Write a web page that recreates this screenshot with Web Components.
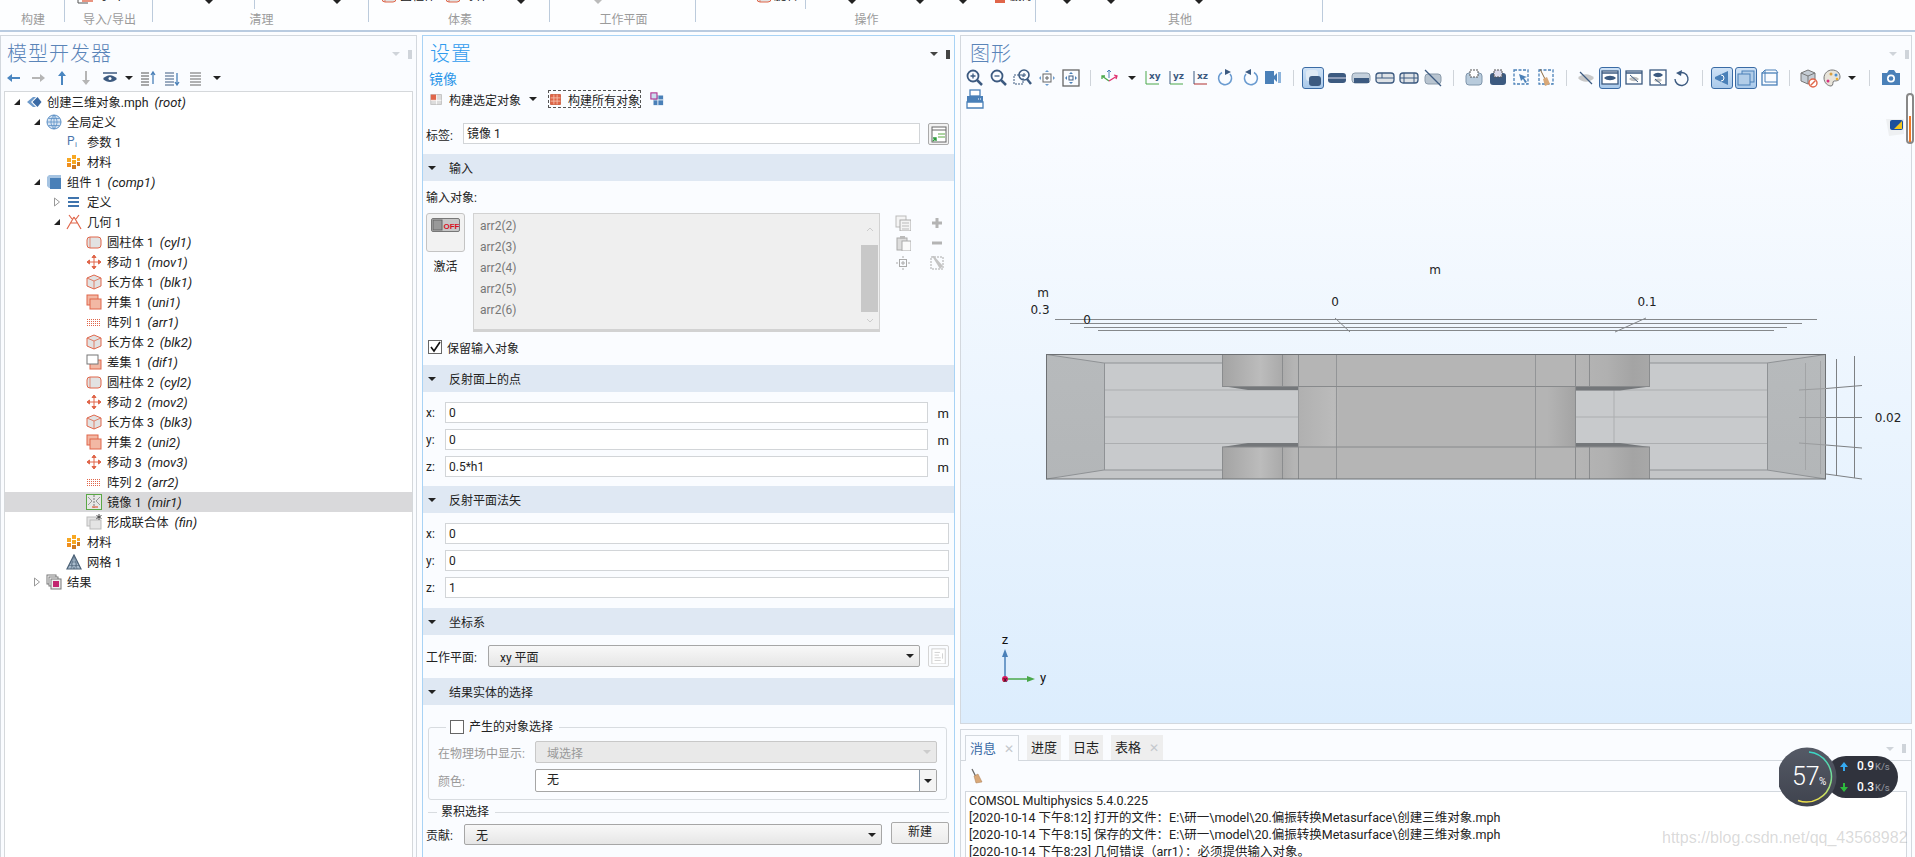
<!DOCTYPE html>
<html lang="zh">
<head>
<meta charset="utf-8">
<title>COMSOL</title>
<style>
    html, body { margin: 0; padding: 0; background: #fcfdff; }
    body {
        width: 1915px;
        height: 857px;
        overflow: hidden;
        position: relative;
        font: 12px Roboto, "Noto Sans CJK SC", sans-serif;
        color: #222;
    }
    .main { display: flex; align-items: flex-start; padding-top: 3px; }
    .right { display: flex; flex-direction: column; gap: 5px; margin-left: 5px; }
</style>
</head>
<body>
<com-ribbon></com-ribbon>
<div class="main">
    <model-panel></model-panel>
    <settings-panel></settings-panel>
    <div class="right">
        <graphics-panel></graphics-panel>
        <messages-panel></messages-panel>
    </div>
</div>
<net-widget></net-widget>
<blog-mark>https://blog.csdn.net/qq_43568982</blog-mark>

<script>
const RED = '#e0664a', PINK = '#f2b8a4', BLUE = '#4a80b8', NAVY = '#3c5a80';
const gridDots = () => {
    let s = '';
    for (let y = 5; y < 12; y += 2) for (let x = 1; x < 15; x += 2) s += `<rect x="${x}" y="${y}" width="1" height="1" fill="${RED}"/>`;
    return s;
};

// 所有图标放在这里, viewBox 由 size 决定
const ICONS = {
    root: `<path d="M1 8l6-5h3L5 8l5 5H7z" fill="#6f9bcb"/><path d="M6.500 8l5-5 4 5-4 5z" fill="#3a6aa5"/>`,
    globe: `<circle cx="8" cy="8" r="7" fill="#d6e4f3" stroke="#5b8fc5"/><path d="M1 8h14M8 1v14M2.500 4.500h11M2.500 11.500h11M8 1c-4 4-4 10 0 14M8 1c4 4 4 10 0 14" fill="none" stroke="#5b8fc5" stroke-width=".8"/>`,
    pi: `<text x="1" y="11" font-size="12" fill="#4a76ad" font-family="Roboto">P</text><text x="9" y="13" font-size="8" fill="#4a76ad" font-family="Roboto">i</text>`,
    mat: `<path fill="#f7a823" d="M1 4h4v4H1zM6 1h4v4H6zM11 4h3v3h-3zM6 6h4v4H6z"/><path fill="#f08f1e" d="M1 9h4v4H1z"/><path fill="#cf7a20" d="M11 8h3v4h-3zM6 11h4v4H6z"/>`,
    comp: `<path d="M1 3l2-2h12v13H3l-2-2z" fill="#a6c4e2"/><rect x="4" y="4" width="11" height="11" fill="${BLUE}"/>`,
    defs: `<path d="M2 4h11M2 8h11M2 12h11" stroke="#3f74ad" stroke-width="2"/>`,
    geom: `<path d="M8 3L1 15M8 3l7 12M3 1l3 4M13 1l-3 4M4 9h8" stroke="${RED}" fill="none" stroke-width="1.200"/>`,
    cyl: `<rect x="1" y="3" width="14" height="11" rx="3" fill="#e2e2e2" stroke="${RED}"/><path d="M4 3v11" stroke="${RED}" stroke-width=".7"/>`,
    mov: `<path d="M8 1v14M1 8h14M8 1L6 3.500h4zM8 15l-2-2.500h4zM1 8l2.500-2v4zM15 8l-2.500-2v4z" stroke="${RED}" fill="${RED}"/>`,
    blk: `<path d="M8 1l7 3v8l-7 3-7-3V4z" fill="#e2e2e2" stroke="${RED}"/><path d="M1 4l7 3 7-3M8 7v8" fill="none" stroke="${RED}" stroke-width=".8"/>`,
    uni: `<rect x="1" y="1" width="11" height="10" fill="${PINK}" stroke="${RED}"/><rect x="4" y="5" width="11" height="10" fill="${PINK}" stroke="${RED}"/>`,
    arr: gridDots(),
    dif: `<rect x="4" y="6" width="11" height="9" fill="${PINK}" stroke="${RED}"/><rect x="1" y="1" width="11" height="9" fill="#fff" stroke="#777"/>`,
    mir: `<rect x=".5" y=".5" width="15" height="15" fill="#e6e6e6" stroke="#5aa845"/><path d="M8 1v13" stroke="#777" stroke-dasharray="2 1"/><path d="M2 3l4 4-4 4M14 3l-4 4 4 4" fill="none" stroke="#999"/><path d="M6 13h6" stroke="${RED}" stroke-width="1.300"/>`,
    fin: `<rect x="1" y="3" width="10" height="9" fill="#e4e4e4" stroke="#bbb"/><rect x="4" y="6" width="11" height="9" fill="#e4e4e4" stroke="#bbb"/><path d="M13 0v6M10.500 1.500l5 3M15.500 1.500l-5 3" stroke="#444"/>`,
    mesh: `<path d="M8 1l7 14H1z" fill="#a9bccd" stroke="#4d6378" stroke-width="1.200"/><path d="M4.500 8h7M3 11.500h10M8 1l-3 14M8 1l3 14M4.500 8L8 15l3.500-7" stroke="#4d6378" stroke-width=".6" fill="none"/>`,
    res: `<rect x="1" y="1" width="9" height="9" fill="#fff" stroke="#777"/><rect x="3" y="3" width="9" height="9" fill="#fff" stroke="#777"/><rect x="5" y="5" width="10" height="10" fill="#eee" stroke="#777"/><rect x="7" y="7" width="6" height="6" fill="#c2256f"/>`,
    exp: `<path d="M1 6v9h10" stroke="#555" fill="none"/><path d="M5 13h11" stroke="${RED}" stroke-width="1.400"/>`,
    trash: `<rect x="3" y="2" width="10" height="13" fill="${RED}"/>`,

    left: `<path d="M1 8l5-4v3h8v2H6v3z" fill="#4a86c0"/>`,
    right: `<path d="M15 8l-5-4v3H2v2h8v3z" fill="#b5b5b5"/>`,
    up: `<path d="M8 1l4 5H9v9H7V6H4z" fill="#4a86c0"/>`,
    down: `<path d="M8 15l4-5H9V1H7v9H4z" fill="#b5b5b5"/>`,
    eye: `<path d="M1 3h14" stroke="${NAVY}" stroke-width="1.500"/><path d="M1 9c4-5 10-5 14 0-4 4-10 4-14 0z" fill="${NAVY}"/><circle cx="8" cy="8.500" r="1.500" fill="#fff"/>`,
    lup: `<path d="M1 3h9M1 6h9M1 9h9M1 12h9M1 15h9" stroke="#555" stroke-dasharray="8 1"/><path d="M13 14V3M11 5l2-3 2 3" stroke="${BLUE}" fill="none" stroke-width="1.300"/>`,
    ldn: `<path d="M1 3h9M1 6h9M1 9h9M1 12h9M1 15h9" stroke="${NAVY}"/><path d="M13 3v11M11 12l2 3 2-3" stroke="${BLUE}" fill="none" stroke-width="1.300"/>`,
    list: `<path d="M2 3h11M2 6h11M2 9h11M2 12h11M2 15h11" stroke="#666"/>`,

    buildsel: `<rect x="1" y="2" width="13" height="12" fill="#ddd" stroke="#bbb"/><rect x="1" y="2" width="7" height="7" fill="${RED}"/><path d="M8 2v12M1 9h13" stroke="#fff"/>`,
    buildall: `<rect x="2" y="2" width="12" height="12" fill="${RED}" stroke="#c9502f"/><path d="M6 2v12M10 2v12M2 6h12M2 10h12" stroke="#f5c5b2"/>`,
    buildblue: `<rect x="4" y="4" width="11" height="11" fill="${BLUE}"/><path d="M9 4v11M4 9h11" stroke="#fff"/><rect x="1" y="1" width="7" height="7" fill="#cde" stroke="#b02a8c" stroke-width="1.200"/>`,
    note: `<rect x="2" y="2" width="14" height="15" fill="#fff" stroke="#666"/><path d="M2 5h14" stroke="#666"/><path d="M8 9h7M8 12h7" stroke="#5aa845"/><path d="M3 16l3-3M3 13h3v3" stroke="#2d9a3c" fill="none" stroke-width="1.400"/>`,
    off: `<rect x=".5" y=".5" width="28" height="13" rx="1.500" fill="#c6c6c6" stroke="#777"/><rect x="2" y="2" width="9" height="10" fill="#999" stroke="#666"/><text x="12.500" y="10.500" font-size="8" font-weight="700" fill="#d8111f" font-family="Liberation Sans">OFF</text>`,
    copy: `<rect x="1" y="1" width="10" height="11" fill="#f4f4f4" stroke="#bbb"/><rect x="5" y="5" width="11" height="11" fill="#f4f4f4" stroke="#aaa"/><path d="M7 8h7M7 11h7M7 14h7" stroke="#bbb"/>`,
    paste: `<rect x="2" y="3" width="10" height="12" fill="#ddd" stroke="#aaa"/><rect x="5" y="1" width="5" height="3" fill="#bbb"/><rect x="7" y="6" width="9" height="10" fill="#fafafa" stroke="#aaa"/>`,
    target: `<rect x="4.500" y="4.500" width="7" height="7" fill="none" stroke="#aaa"/><path d="M8 6v4M6 8h4M8 1v2M8 13v2M1 8h2M13 8h2" stroke="#aaa"/>`,
    plus: `<path d="M8 3v10M3 8h10" stroke="#b4b4b4" stroke-width="3"/>`,
    minus: `<path d="M3 8h10" stroke="#b4b4b4" stroke-width="3"/>`,
    clear: `<rect x="2" y="2" width="12" height="12" fill="none" stroke="#aaa" stroke-dasharray="2 1"/><path d="M3 1l8 13 3-3L5 1z" fill="#c4c4c4"/>`,
    wp: `<rect x="1" y="1" width="15" height="17" fill="#fff" stroke="#ccc"/><path d="M4 5h6M4 8h5M4 11h7M4 14h7M13 6v6" stroke="#ccc"/>`,
    broom: `<path d="M3 1l4 8" stroke="#666" stroke-width="1.300"/><path d="M5 8l4-2 4 8-6 1z" fill="#d9a878" stroke="#a87a50" stroke-width=".5"/>`,

    zin: `<circle cx="8" cy="8" r="5.500" fill="none" stroke="${NAVY}" stroke-width="1.800"/><path d="M12 12l5 5" stroke="${NAVY}" stroke-width="2.500"/><path d="M8 5.500v5M5.500 8h5" stroke="${NAVY}" stroke-width="1.300"/>`,
    zout: `<circle cx="8" cy="8" r="5.500" fill="none" stroke="${NAVY}" stroke-width="1.800"/><path d="M12 12l5 5" stroke="${NAVY}" stroke-width="2.500"/><path d="M5.500 8h5" stroke="${NAVY}" stroke-width="1.300"/>`,
    zbox: `<rect x="1" y="7" width="9" height="9" fill="none" stroke="${NAVY}" stroke-dasharray="2 1"/><circle cx="11" cy="7" r="5" fill="none" stroke="${NAVY}" stroke-width="1.600"/><path d="M14 11l4 5" stroke="${NAVY}" stroke-width="2.400"/><path d="M11 5v4M9 7h4" stroke="${NAVY}"/>`,
    zsel: `<rect x="6" y="6" width="8" height="8" fill="none" stroke="#666"/><path d="M10 8v4M8 10h4" stroke="#666"/><path d="M10 2l-2 2h4zM10 18l-2-2h4zM2 10l2-2v4zM18 10l-2-2v4z" fill="#6a9bd0"/>`,
    zext: `<rect x="2" y="2" width="16" height="16" fill="none" stroke="#666" stroke-width="1.300"/><rect x="8" y="8" width="4" height="4" fill="none" stroke="${NAVY}"/><path d="M10 4l-2 2h4zM10 16l-2-2h4zM4 10l2-2v4zM16 10l-2-2v4z" fill="${BLUE}"/>`,
    axes: `<path d="M10 10V2M8 4l2-2 2 2" stroke="${BLUE}" fill="none"/><path d="M10 13L3 8M3 11V8h3" stroke="#4aa84a" fill="none" stroke-width="1.300"/><path d="M10 13l8-5M15 7l3 1-1 3" stroke="#e0306f" fill="none" stroke-width="1.300"/>`,
    xy: `<path d="M2 3v13h13" stroke="#4aa84a" fill="none"/><text x="5" y="11" font-size="9" font-weight="700" fill="${NAVY}" font-family="DejaVu Sans">xy</text>`,
    yz: `<path d="M2 3v13" stroke="${NAVY}"/><path d="M2 16h13" stroke="#4aa84a"/><text x="5" y="11" font-size="9" font-weight="700" fill="${NAVY}" font-family="DejaVu Sans">yz</text>`,
    xz: `<path d="M2 3v13" stroke="${NAVY}"/><path d="M2 16h13" stroke="#b03030"/><text x="5" y="11" font-size="9" font-weight="700" fill="${NAVY}" font-family="DejaVu Sans">xz</text>`,
    rcw: `<path d="M14 6a6.500 6.500 0 1 1-8-1.500" fill="none" stroke="#6a9bd0" stroke-width="1.600"/><path d="M9 1l6 3-6 3z" fill="${NAVY}"/>`,
    rccw: `<path d="M6 6a6.500 6.500 0 1 0 8-1.500" fill="none" stroke="#6a9bd0" stroke-width="1.600"/><path d="M11 1L5 4l6 3z" fill="${NAVY}"/>`,
    cam3: `<rect x="1" y="3" width="9" height="13" fill="${BLUE}"/><path d="M10 8l3-3v9l-3-3z" fill="${BLUE}"/><rect x="14" y="4" width="3" height="11" fill="#8db4dc"/>`,
    sfull: `<rect x="3" y="2" width="12" height="11" rx="3" fill="#dfeaf5"/><rect x="6" y="8" width="12" height="10" rx="3" fill="${NAVY}"/>`,
    c1: `<rect x="1" y="5" width="18" height="10" rx="3" fill="${NAVY}"/><path d="M1 10h18" stroke="#dde"/>`,
    c2: `<rect x="1" y="5" width="18" height="10" rx="3" fill="#c4d0dc" stroke="#8a9aaa"/><rect x="3" y="10" width="15" height="5" fill="${NAVY}"/>`,
    c3: `<rect x="1" y="5" width="18" height="10" rx="3" fill="#dfe3e7" stroke="${NAVY}" stroke-width="1.300"/><path d="M1 10h18M7 5v5" stroke="${NAVY}"/>`,
    c4: `<rect x="1" y="5" width="18" height="10" rx="3" fill="#dfe3e7" stroke="${NAVY}" stroke-width="1.300"/><path d="M1 10h18M5 5v10M15 5v10" stroke="${NAVY}"/>`,
    c5: `<rect x="2" y="6" width="16" height="10" rx="3" fill="#b8c4d0" stroke="#8a9aaa"/><path d="M2 2l16 16" stroke="${NAVY}" stroke-width="1.300"/>`,
    sa: `<rect x="2" y="5" width="16" height="12" rx="3" fill="#b8cbdc" stroke="#7f95ab"/><rect x="6" y="2" width="8" height="7" fill="#fff" stroke="#555" stroke-dasharray="2 1"/>`,
    sb: `<rect x="2" y="5" width="16" height="12" rx="3" fill="${NAVY}"/><rect x="6" y="2" width="8" height="7" fill="#dde" stroke="#555" stroke-dasharray="2 1"/>`,
    sc: `<rect x="2" y="2" width="14" height="14" fill="none" stroke="${BLUE}" stroke-width="1.300" stroke-dasharray="3 1.500"/><path d="M7 6l8 3-3 1 3 4-2 1-2-4-2 2z" fill="${BLUE}"/>`,
    sd: `<rect x="3" y="2" width="14" height="14" fill="none" stroke="${BLUE}" stroke-width="1.300" stroke-dasharray="3 1.500"/><path d="M4 1l5 10" stroke="#8a6a40"/><path d="M7 11l4-2 3 7-5 2z" fill="#d9a878"/>`,
    hide: `<path d="M2 10c4-5 12-5 16 0-4 5-12 5-16 0z" fill="#c8c8c8"/><path d="M4 4l12 12" stroke="${NAVY}" stroke-width="1.200"/>`,
    win: `<rect x="2" y="3" width="16" height="13" fill="#fff" stroke="${NAVY}" stroke-width="1.300"/><path d="M2 5h16" stroke="${NAVY}" stroke-width="1.500"/><path d="M4 10c3-3 9-3 12 0-3 3-9 3-12 0z" fill="${NAVY}"/>`,
    win2: `<rect x="2" y="3" width="16" height="13" fill="#fff" stroke="${NAVY}" stroke-width="1.300"/><path d="M2 5h16" stroke="${NAVY}" stroke-width="1.500"/><path d="M5 11c3-3 7-3 10 0-3 3-7 3-10 0z" fill="#c0c0c0"/><path d="M6 7l8 7" stroke="${NAVY}"/>`,
    win3: `<rect x="2" y="2" width="16" height="15" fill="#fff" stroke="${NAVY}" stroke-width="1.300"/><path d="M5 7c3-3 7-3 10 0-3 3-7 3-10 0z" fill="${NAVY}"/><path d="M6 12c3-2 6-2 8 0-2 3-6 3-8 0z" fill="#c0c0c0"/><path d="M7 11l6 5" stroke="${NAVY}"/>`,
    undo: `<path d="M7 5a6.500 6.500 0 1 1-4 6" fill="none" stroke="${NAVY}" stroke-width="1.400"/><path d="M10 2L4 5l5 3z" fill="${NAVY}"/>`,
    persp: `<path d="M16 3L3 9v2l13 6z" fill="${BLUE}"/><path d="M9 7a3 3 0 0 1 0 6" fill="none" stroke="#fff"/>`,
    ortho: `<rect x="6" y="3" width="12" height="11" fill="#b2cde8" stroke="${BLUE}"/><rect x="2" y="6" width="12" height="11" fill="#b2cde8" stroke="${BLUE}"/>`,
    box: `<rect x="2" y="5" width="15" height="12" fill="none" stroke="${BLUE}" stroke-width="1.300"/><path d="M2 5l3-3h11l2 3M5 2v12h12" fill="none" stroke="${BLUE}"/>`,
    noscene: `<path d="M10 2l7 3v8l-7 3-7-3V5z" fill="#c4ccd4" stroke="#777"/><path d="M3 5l7 3 7-3M10 8v8" stroke="#777" fill="none"/><circle cx="15" cy="15" r="4" fill="#fff" stroke="${RED}" stroke-width="1.400"/><path d="M12.500 17.500l5-5" stroke="${RED}" stroke-width="1.400"/>`,
    palette: `<path d="M10 2c5 0 8 3 8 7s-4 4-6 4 0 5-3 5-7-3-7-8 4-8 8-8z" fill="#e8e4da" stroke="#777"/><circle cx="9" cy="6" r="1.500" fill="#d9a040"/><circle cx="14" cy="7" r="1.500" fill="#4a90d0"/><circle cx="15" cy="11" r="1.300" fill="#f0b030"/><circle cx="6" cy="13" r="1.500" fill="#d83080"/>`,
    camera: `<path d="M1 5h5l2-3h5l2 3h4v12H1z" fill="${BLUE}"/><circle cx="10" cy="10.500" r="4" fill="#fff"/><circle cx="10" cy="10.500" r="2.300" fill="${BLUE}"/>`,
    print: `<rect x="5" y="1" width="10" height="6" fill="#fff" stroke="${BLUE}" stroke-width="1.300"/><path d="M2 7h16v6H2z" fill="${BLUE}"/><path d="M2 13h16v6H2z" fill="#fff" stroke="${BLUE}" stroke-width="1.300"/><path d="M13 10h1M15 10h1" stroke="#fff"/>`
};

class ComIcon extends HTMLElement {
    connectedCallback() {
        const size = this.getAttribute('size') || 16;
        const box = this.getAttribute('box') || size;
        this.attachShadow({ mode: 'open' });
        this.shadowRoot.innerHTML = `
            <style>
                :host { display: inline-flex; flex: none; width: ${size}px; height: ${size}px; }
                svg { display: block; }
            </style>
            <svg width="${size}" height="${size}" viewBox="0 0 ${box} ${box}">${ICONS[this.getAttribute('name')] || ''}</svg>`;
    }
}
customElements.define('com-icon', ComIcon);

class ComTri extends HTMLElement {
    connectedCallback() {
        this.attachShadow({ mode: 'open' });
        this.shadowRoot.innerHTML = `
            <style>
                :host { display: inline-block; flex: none; width: 0; height: 0; border-left: 4px solid transparent; border-right: 4px solid transparent; border-top: 4px solid var(--tri, #222); }
            </style>`;
    }
}
customElements.define('com-tri', ComTri);

// 顶部功能区, 只露出底部一点
const RIBBON = [
    { w: 65, label: '构建', items: [] },
    { w: 88, label: '导入/导出', items: [['i', 12, 'exp'], ['x', 4, '导出']] },
    { w: 216, label: '清理', items: [['t', 52], ['s', 41], ['t', 78]] },
    { w: 181, label: '体素', items: [['i', 12, 'cyl'], ['x', 3, '圆柱体'], ['i', 9, 'cyl'], ['x', 3, '球体'], ['t', 29]] },
    { w: 146, label: '工作平面', items: [['g', 44]] },
    { w: 340, label: '操作', items: [['i', 60, 'cyl'], ['x', 2, '旋转'], ['s', 7], ['t', 42], ['t', 60], ['t', 35], ['i', 25, 'trash'], ['x', 2, '删除']] },
    { w: 287, label: '其他', items: [['t', 27], ['t', 36], ['t', 80]] }
];

class ComRibbon extends HTMLElement {
    connectedCallback() {
        this.attachShadow({ mode: 'open' });
        const groups = RIBBON.map(g => {
            const items = g.items.map(([k, m, v]) => {
                if (k === 't') return `<com-tri style="margin-left:${m}px"></com-tri>`;
                if (k === 'g') return `<com-tri style="margin-left:${m}px;--tri:#bbb"></com-tri>`;
                if (k === 's') return `<span class="sep" style="margin-left:${m}px"></span>`;
                if (k === 'i') return `<com-icon class="cut" name="${v}" style="margin-left:${m}px"></com-icon>`;
                return `<span class="cut txt" style="margin-left:${m}px">${v}</span>`;
            }).join('');
            return `<div class="group" style="width:${g.w}px"><div class="top">${items}</div><div class="label">${g.label}</div></div>`;
        }).join('');
        this.shadowRoot.innerHTML = `
            <style>
                :host { display: flex; height: 30px; background: #fdfeff; border-bottom: 2px solid #b9cbe0; box-sizing: content-box; }
                .group { box-sizing: border-box; height: 22px; border-right: 1px solid #bccbdc; display: flex; flex-direction: column; }
                .top { display: flex; flex: none; height: 9px; overflow: hidden; align-items: flex-start; }
                .sep { flex: none; width: 1px; height: 9px; background: #bccbdc; }
                .cut { margin-top: -12px; }
                .txt { line-height: 16px; font-size: 12px; color: #111; white-space: nowrap; }
                .label { flex: none; text-align: center; color: #9b9b9b; font-size: 12px; line-height: 18px; height: 18px; margin-top: 2px; margin-left: 2px; white-space: nowrap; }
            </style>
            ${groups}`;
    }
}
customElements.define('com-ribbon', ComRibbon);

// 带标题和图钉的面板
class ComPanel extends HTMLElement {
    connectedCallback() {
        this.attachShadow({ mode: 'open' });
        const active = this.hasAttribute('active');
        this.shadowRoot.innerHTML = `
            <style>
                :host { display: block; box-sizing: border-box; background: #fafcff; border: 1px solid ${active ? '#a9d3f5' : '#d3d8de'}; border-bottom: 0; }
                header { display: flex; align-items: center; height: 36px; padding-left: var(--title-x, 5px); }
                h2 { margin: 0; font-size: 20px; font-weight: 300; letter-spacing: 1px; line-height: 36px; color: ${active ? '#2f9bee' : '#5a84b8'}; flex: 1; }
                .ctl { display: flex; gap: 8px; align-items: center; margin-right: var(--ctl-x, 4px); --tri: ${active ? '#444' : '#cfd4da'}; }
                .pin { width: 4px; height: 9px; background: ${active ? '#444' : '#cfd4da'}; margin-right: 1px; }
            </style>
            <header><h2>${this.getAttribute('heading') || ''}</h2><div class="ctl"><com-tri></com-tri><span class="pin"></span></div></header>
            <slot></slot>`;
    }
}
customElements.define('com-panel', ComPanel);

class ToolBar extends HTMLElement {
    connectedCallback() {
        this.attachShadow({ mode: 'open' });
        // spec: 图标名 | t宽度 三角 | s宽度 分隔 | *名字 选中 | br 换行
        const cells = this.getAttribute('spec').trim().split(/\s+/).map(c => {
            if (c === 'br') return '<div class="br"></div>';
            if (/^t\d+/.test(c)) return `<div class="cell" style="width:${c.slice(1)}px"><com-tri></com-tri></div>`;
            if (/^s\d+/.test(c)) return `<div class="cell" style="width:${c.slice(1)}px"><span class="sep"></span></div>`;
            const on = c[0] === '*';
            const name = on ? c.slice(1) : c;
            return `<div class="cell"><span class="${on ? 'on' : ''}"><com-icon name="${name}" size="${this.getAttribute('size') || 20}" box="${this.getAttribute('box') || 20}"></com-icon></span></div>`;
        }).join('');
        this.shadowRoot.innerHTML = `
            <style>
                :host { display: flex; flex-wrap: wrap; }
                .cell { width: ${this.getAttribute('cell') || 24}px; height: 21px; display: flex; align-items: center; justify-content: center; flex: none; }
                .cell span { display: flex; }
                .sep { width: 1px; height: 16px; background: #cfd4da; }
                .br { flex: 0 0 100%; height: 0; }
                .on { border: 1px solid #3a6ba5; border-radius: 3px; background: linear-gradient(#cfe2f6, #a9c9ea); margin: -1px; }
            </style>
            ${cells}`;
    }
}
customElements.define('tool-bar', ToolBar);

class TreeRow extends HTMLElement {
    connectedCallback() {
        this.attachShadow({ mode: 'open' });
        const level = +this.getAttribute('level');
        const t = this.getAttribute('toggle');
        const tag = this.getAttribute('tag');
        const toggle = t === 'open'
            ? '<svg width="8" height="8"><path d="M7 1v6H1z" fill="#222"/></svg>'
            : t === 'shut' ? '<svg width="8" height="10"><path d="M1.500 1l5 4-5 4z" fill="#fff" stroke="#999"/></svg>' : '';
        this.shadowRoot.innerHTML = `
            <style>
                :host { display: flex; align-items: center; height: 20px; padding-left: ${8 + level * 20}px; white-space: nowrap; font-size: 12.300px; color: #222; }
                :host([selected]) { background: #d9d9db; }
                .t { width: 13px; flex: none; display: flex; }
                com-icon { margin-right: 5px; }
                i { margin-left: 6px; font-size: 13px; }
            </style>
            <span class="t">${toggle}</span><com-icon name="${this.getAttribute('icon')}"></com-icon><span><slot></slot></span>${tag ? `<i>(${tag})</i>` : ''}`;
    }
}
customElements.define('tree-row', TreeRow);

class ModelPanel extends HTMLElement {
    connectedCallback() {
        this.attachShadow({ mode: 'open' });
        const rows = [
            [0, 'open', 'root', '创建三维对象.mph', 'root'], [1, 'open', 'globe', '全局定义'], [2, '', 'pi', '参数 1'], [2, '', 'mat', '材料'],
            [1, 'open', 'comp', '组件 1', 'comp1'], [2, 'shut', 'defs', '定义'], [2, 'open', 'geom', '几何 1'],
            [3, '', 'cyl', '圆柱体 1', 'cyl1'], [3, '', 'mov', '移动 1', 'mov1'], [3, '', 'blk', '长方体 1', 'blk1'], [3, '', 'uni', '并集 1', 'uni1'],
            [3, '', 'arr', '阵列 1', 'arr1'], [3, '', 'blk', '长方体 2', 'blk2'], [3, '', 'dif', '差集 1', 'dif1'], [3, '', 'cyl', '圆柱体 2', 'cyl2'],
            [3, '', 'mov', '移动 2', 'mov2'], [3, '', 'blk', '长方体 3', 'blk3'], [3, '', 'uni', '并集 2', 'uni2'], [3, '', 'mov', '移动 3', 'mov3'],
            [3, '', 'arr', '阵列 2', 'arr2'], [3, '', 'mir', '镜像 1', 'mir1', true], [3, '', 'fin', '形成联合体', 'fin'],
            [2, '', 'mat', '材料'], [2, '', 'mesh', '网格 1'], [1, 'shut', 'res', '结果']
        ];
        const html = rows.map(([l, t, ic, txt, tag, sel]) =>
            `<tree-row level="${l}" toggle="${t}" icon="${ic}" ${tag ? `tag="${tag}"` : ''} ${sel ? 'selected' : ''}>${txt}</tree-row>`).join('');
        this.shadowRoot.innerHTML = `
            <style>
                :host { display: block; width: 417px; flex: none; }
                com-panel { display: block; height: 830px; --title-x: 6px; --ctl-x: 3px; }
                tool-bar { height: 21px; margin: -5px 0 0 1px; }
                .tree { box-sizing: border-box; margin: 3px 3px 0 3px; height: 770px; background: #fff; border: 1px solid #d5d8db; }
            </style>
            <com-panel heading="模型开发器">
                <tool-bar spec="left right up down eye t14 lup ldn list t18" size="16" box="16" cell="24"></tool-bar>
                <div class="tree">${html}</div>
            </com-panel>`;
    }
}
customElements.define('model-panel', ModelPanel);

class SetSection extends HTMLElement {
    connectedCallback() {
        this.attachShadow({ mode: 'open' });
        this.shadowRoot.innerHTML = `
            <style>
                :host { display: block; }
                .head { display: flex; align-items: center; box-sizing: border-box; height: 27px; background: #dfe8f3; font-size: 12px; color: #222; }
                com-tri { margin: 0 13px 0 5px; }
                .body { padding: var(--pad, 10px 5px 10px 3px); }
            </style>
            <div class="head"><com-tri></com-tri>${this.getAttribute('heading')}</div>
            <div class="body"><slot></slot></div>`;
    }
}
customElements.define('set-section', SetSection);

class SetField extends HTMLElement {
    connectedCallback() {
        this.attachShadow({ mode: 'open' });
        const unit = this.getAttribute('unit');
        this.shadowRoot.innerHTML = `
            <style>
                :host { display: flex; align-items: center; height: 21px; font-size: 12px; }
                label { flex: none; width: ${this.getAttribute('lw') || 19}px; color: #222; padding-top: 1px; }
                .in { flex: 1; box-sizing: border-box; height: 21px; line-height: 18px; padding: 1px 3px 0; background: #fff; border: 1px solid #d2d5d8; font-size: 12px; }
                .u { flex: none; width: 21px; text-align: right; font-size: 13px; padding-top: 1px; }
            </style>
            <label>${this.getAttribute('label')}</label><div class="in">${this.getAttribute('value')}</div>${unit ? `<span class="u">${unit}</span>` : ''}`;
    }
}
customElements.define('set-field', SetField);

class SetSelect extends HTMLElement {
    connectedCallback() {
        this.attachShadow({ mode: 'open' });
        const off = this.hasAttribute('disabled');
        this.shadowRoot.innerHTML = `
            <style>
                :host { display: flex; align-items: center; flex: 1; box-sizing: border-box; height: ${this.getAttribute('h') || 22}px; padding: 0 5px 0 11px; border: 1px solid ${off ? '#c8c8c8' : '#a6a6a6'}; border-radius: 2px; background: ${off ? '#e9e9e9' : 'linear-gradient(#f8f8f8,#e6e6e6)'}; font-size: 12px; color: ${off ? '#999' : '#222'}; --tri: ${off ? '#ccc' : '#222'}; }
                span { flex: 1; }
            </style>
            <span>${this.getAttribute('value')}</span><com-tri></com-tri>`;
    }
}
customElements.define('set-select', SetSelect);

class SetCheck extends HTMLElement {
    connectedCallback() {
        this.attachShadow({ mode: 'open' });
        const on = this.hasAttribute('checked');
        this.shadowRoot.innerHTML = `
            <style>
                :host { display: inline-flex; align-items: center; gap: 5px; height: 14px; font-size: 12px; color: #222; }
                .b { box-sizing: border-box; width: 14px; height: 14px; background: #fff; border: 1px solid #666; display: flex; }
            </style>
            <span class="b">${on ? '<svg width="12" height="12"><path d="M2 6l3 4 6-9" fill="none" stroke="#111" stroke-width="1.600"/></svg>' : ''}</span><slot></slot>`;
    }
}
customElements.define('set-check', SetCheck);

class InputList extends HTMLElement {
    connectedCallback() {
        this.attachShadow({ mode: 'open' });
        const items = ['arr2(2)', 'arr2(3)', 'arr2(4)', 'arr2(5)', 'arr2(6)'].map(x => `<div>${x}</div>`).join('');
        this.shadowRoot.innerHTML = `
            <style>
                :host { display: flex; height: 119px; font-size: 12px; }
                .act { flex: none; width: 39px; margin-right: 8px; text-align: center; font-size: 12px; }
                .btn { box-sizing: border-box; height: 39px; border: 1px solid #c4c4c4; border-radius: 3px; background: #f2f2f2; display: flex; align-items: center; justify-content: center; margin-bottom: 5px; }
                .list { box-sizing: border-box; width: 407px; flex: none; display: flex; background: #efefef; border: 1px solid #d2d2d2; border-bottom-width: 3px; }
                .items { flex: 1; padding: 2px 0 0 6px; color: #777; line-height: 21px; }
                .bar { width: 17px; margin-right: 1px; display: flex; flex-direction: column; align-items: center; }
                .ch { height: 31px; display: flex; align-items: center; flex: none; }
                .ch.b { height: 17px; }
                .th { align-self: stretch; height: 67px; background: #c8c8c8; flex: none; }
                .tools { margin-left: 13px; display: grid; grid-template-columns: 20px 20px; column-gap: 14px; grid-auto-rows: 20px; justify-items: center; align-items: center; }
            </style>
            <div class="act"><div class="btn"><com-icon name="off" size="29"></com-icon></div>激活</div>
            <div class="list">
                <div class="items">${items}</div>
                <div class="bar">
                    <div class="ch"><svg width="8" height="5"><path d="M1 4l3-3 3 3" fill="none" stroke="#ccc"/></svg></div>
                    <div class="th"></div>
                    <div class="ch b"><svg width="8" height="5"><path d="M1 1l3 3 3-3" fill="none" stroke="#ccc"/></svg></div>
                </div>
            </div>
            <div class="tools">
                <com-icon name="copy"></com-icon><com-icon name="plus"></com-icon>
                <com-icon name="paste"></com-icon><com-icon name="minus"></com-icon>
                <com-icon name="target"></com-icon><com-icon name="clear"></com-icon>
            </div>`;
    }
}
customElements.define('input-list', InputList);

class SettingsPanel extends HTMLElement {
    connectedCallback() {
        this.attachShadow({ mode: 'open' });
        this.shadowRoot.innerHTML = `
            <style>
                :host { display: block; width: 533px; flex: none; margin-left: 5px; font-size: 12px; }
                com-panel { display: block; height: 830px; --title-x: 7px; --ctl-x: 3px; }
                .sub { height: 17px; line-height: 17px; margin: -1px 0 0 6px; font-size: 14px; color: #2a95e8; }
                .build { display: flex; align-items: center; height: 21px; padding: 1px 0 0 7px; box-sizing: border-box; }
                .build com-icon { margin-right: 6px; }
                .focus { display: inline-flex; align-items: center; outline: 1px dashed #555; margin-left: 12px; height: 16px; }
                .lab { display: flex; align-items: center; height: 21px; margin: 14px 0 10px; padding: 0 5px 0 3px; }
                .lab set-field { flex: 1; }
                .sq { flex: none; box-sizing: border-box; width: 21px; height: 22px; margin-left: 8px; display: flex; align-items: center; justify-content: center; border: 1px solid #aaa; border-radius: 2px; background: #f2f2f2; }
                .cap { height: 16px; line-height: 16px; margin: -1px 0 7px; }
                set-field + set-field { margin-top: 6px; }
                .keep { margin-top: 8px; padding-left: 2px; display: flex; }
                .row { display: flex; align-items: center; }
                .row > .name { flex: none; }
                .wpbtn { flex: none; box-sizing: border-box; width: 21px; height: 22px; margin-left: 8px; border: 1px solid #d5d5d5; border-radius: 2px; display: flex; align-items: center; justify-content: center; }
                fieldset { margin: 0; padding: 0; min-width: 0; }
                .g1 { margin: 15px 0 0 2px; box-sizing: border-box; border: 1px solid #d8dce0; border-radius: 3px; padding: 7px 9px 7px 9px; color: #999; width: 519px; }
                legend { padding: 0 6px 0 4px; height: 14px; line-height: 14px; }
                .g1 legend { margin-left: 8px; }
                .g1 .name { width: 97px; }
                .combo { flex: 1; display: flex; height: 23px; box-sizing: border-box; border: 1px solid #a6a6a6; border-radius: 2px; margin-top: 6px; color: #222; background: #fff; }
                .g1 .row + .row .name { margin-top: 6px; }
                .combo span { flex: 1; padding-left: 11px; line-height: 21px; border-right: 1px solid #8a9aaa; }
                .combo b { flex: none; width: 16px; display: flex; align-items: center; justify-content: center; background: #f4f4f4; }
                .g2 { margin: 5px 0 0 2px; border: 0; border-top: 1px solid #d8dce0; padding: 0; color: #222; }
                .g2 legend { margin-left: 9px; }
                .new { flex: none; box-sizing: border-box; width: 58px; height: 22px; margin: -4px 0 0 9px; line-height: 19px; text-align: center; border: 1px solid #aaa; border-radius: 2px; background: linear-gradient(#f8f8f8,#ececec); }
                .last { height: 21px; margin: 5px 0 0 -2px; }
                .last .name { width: 38px; }
            </style>
            <com-panel heading="设置" active>
                <div class="sub">镜像</div>
                <div class="build">
                    <com-icon name="buildsel" size="13" box="16"></com-icon>构建选定对象<com-tri style="margin-left:8px"></com-tri>
                    <span class="focus"><com-icon name="buildall" size="13" box="16"></com-icon>构建所有对象</span>
                    <com-icon name="buildblue" size="14" box="16" style="margin-left:10px"></com-icon>
                </div>
                <div class="lab">
                    <set-field label="标签:" value="镜像 1" lw="37"></set-field>
                    <div class="sq"><com-icon name="note" size="18" box="18"></com-icon></div>
                </div>
                <set-section heading="输入" style="--pad:10px 5px 11px 3px">
                    <div class="cap">输入对象:</div>
                    <input-list></input-list>
                    <set-check class="keep" checked>保留输入对象</set-check>
                </set-section>
                <set-section heading="反射面上的点" style="--pad:10px 5px 9px 3px">
                    <set-field label="x:" value="0" unit="m"></set-field>
                    <set-field label="y:" value="0" unit="m"></set-field>
                    <set-field label="z:" value="0.5*h1" unit="m"></set-field>
                </set-section>
                <set-section heading="反射平面法矢">
                    <set-field label="x:" value="0"></set-field>
                    <set-field label="y:" value="0"></set-field>
                    <set-field label="z:" value="1"></set-field>
                </set-section>
                <set-section heading="坐标系" style="--pad:10px 5px 11px 3px">
                    <div class="row">
                        <span class="name" style="width:62px">工作平面:</span>
                        <set-select value="xy 平面"></set-select>
                        <div class="wpbtn"><com-icon name="wp" size="16" box="18"></com-icon></div>
                    </div>
                </set-section>
                <set-section heading="结果实体的选择" style="--pad:0 5px 0 3px">
                    <fieldset class="g1">
                        <legend><set-check>产生的对象选择</set-check></legend>
                        <div class="row"><span class="name">在物理场中显示:</span><set-select value="域选择" disabled></set-select></div>
                        <div class="row"><span class="name">颜色:</span><div class="combo"><span>无</span><b><com-tri></com-tri></b></div></div>
                    </fieldset>
                    <fieldset class="g2">
                        <legend>累积选择</legend>
                        <div class="row last"><span class="name">贡献:</span><set-select value="无" h="21"></set-select><div class="new">新建</div></div>
                    </fieldset>
                </set-section>
            </com-panel>`;
    }
}
customElements.define('settings-panel', SettingsPanel);

// 几何视图, viewBox 用截图坐标
class GeomView extends HTMLElement {
    connectedCallback() {
        this.attachShadow({ mode: 'open' });
        const line = (x1, y1, x2, y2, c = '#8f9295', w = 1) => `<line x1="${x1}" y1="${y1}" x2="${x2}" y2="${y2}" stroke="${c}" stroke-width="${w}"/>`;
        const txt = (x, y, s) => `<text x="${x}" y="${y}" text-anchor="middle" font-family="DejaVu Sans" font-size="12" fill="#222">${s}</text>`;
        let v = '';
        // 顶上的坐标线
        [[1055, 1817, 319.5], [1070, 1802, 323.5], [1084, 1787, 327.5], [1098, 1774, 330.5]].forEach(([a, b, y]) => v += line(a, y, b, y, '#85888b'));
        v += line(1335, 318, 1350, 332, '#85888b') + line(1646, 318, 1615, 332, '#85888b');
        // 主体
        v += `<rect x="1046.500" y="354.500" width="779" height="124.500" fill="#c3c5c7"/>`;
        v += `<rect x="1104" y="363" width="663" height="107" fill="#c8cacc"/>`;
        v += `<path d="M1046.500 354.500L1104 363V470L1046.500 479z" fill="url(#trap)"/><path d="M1825.500 354.500L1767 363V470L1825.500 479z" fill="url(#trap)"/>`;
        [390, 417, 443.5].forEach(y => v += line(1104, y, 1767, y, '#acaeb0'));
        v += line(1614, 386, 1614, 447, '#acaeb0');
        v += line(1104, 363, 1222, 363) + line(1104, 470, 1222, 470) + line(1650, 363, 1767, 363) + line(1650, 470, 1767, 470);
        v += line(1104.5, 363, 1104.5, 470) + line(1767.5, 363, 1767.5, 470) + line(1046.5, 354.5, 1104, 363) + line(1046.5, 479, 1104, 470) + line(1825.5, 354.5, 1767, 363) + line(1825.5, 479, 1767, 470);
        // 暗色缝隙
        v += `<path d="M1222 386l26 4h50v-4zM1222 447l26-4h50v4zM1650 386.500l-30 4h-45v-4zM1650 447l-30-4h-45v4z" fill="#74777a"/>`;
        // 上下两块和中柱
        v += `<rect x="1222" y="354.500" width="428" height="32" fill="url(#blk)"/><rect x="1222" y="447" width="428" height="32" fill="url(#blk)"/>`;
        v += `<rect x="1298" y="386.500" width="277" height="60.500" fill="url(#mid)"/>`;
        [1222.5, 1282.5, 1298.5, 1575.5, 1589.5, 1649.5].forEach(x => { v += line(x, 354.5, x, 386.5, '#8a8c8e') + line(x, 447, x, 479, '#8a8c8e'); });
        [1336.5, 1535.5].forEach(x => v += line(x, 354.5, x, 479, '#939597'));
        v += line(1298.5, 386.5, 1298.5, 447, '#9a9c9e') + line(1575.5, 386.5, 1575.5, 447, '#8a8c8e');
        v += line(1222, 386.5, 1650, 386.5, '#888a8c') + line(1222, 447, 1650, 447, '#888a8c');
        v += `<rect x="1046.500" y="354.500" width="779" height="124.500" fill="none" stroke="#6d7073"/>`;
        // 右边网格
        v += line(1836.5, 359, 1836.5, 476, '#7d8083') + line(1854.5, 356, 1854.5, 478, '#7d8083');
        v += line(1805.5, 363, 1805.5, 470, '#a2a4a6') + line(1820.5, 361, 1820.5, 474, '#a2a4a6');
        v += line(1799, 390, 1826, 388.5, '#9a9c9e') + line(1826, 388.5, 1862, 385.5, '#7d8083');
        v += line(1799, 417.5, 1826, 417.5, '#9a9c9e') + line(1826, 417.5, 1862, 417.5, '#7d8083');
        v += line(1799, 443, 1826, 445, '#9a9c9e') + line(1826, 445, 1862, 448, '#7d8083');
        v += line(1826, 474, 1862, 479, '#7d8083');
        // 刻度文字
        v += txt(1043, 297, 'm') + txt(1040, 314, '0.3') + txt(1087, 324, '0') + txt(1335, 306, '0') + txt(1435, 274, 'm') + txt(1647, 306, '0.1') + txt(1888, 422, '0.02');
        // 坐标轴
        v += `<path d="M1005 679v-27" stroke="${BLUE}" stroke-width="1.500"/><path d="M1005 649l-3 8h6z" fill="${BLUE}"/>`;
        v += `<path d="M1005 679h24" stroke="#4aa84a" stroke-width="1.500"/><path d="M1035 679l-8-3v6z" fill="#4aa84a"/>`;
        v += `<circle cx="1005" cy="679" r="3" fill="#d61a5c"/>`;
        v += `<text x="1005" y="644" text-anchor="middle" font-family="Roboto" font-size="13" fill="#111">z</text>`;
        v += `<text x="1043" y="682" text-anchor="middle" font-family="Roboto" font-size="13" fill="#111">y</text>`;
        v += `<text x="1005" y="682" text-anchor="middle" font-family="Roboto" font-size="8" fill="#111">x</text>`;
        this.shadowRoot.innerHTML = `
            <style>
                :host { display: block; height: 611px; background: linear-gradient(#fafcff, #dcedfd); border-bottom: 1px solid #d3d8de; }
                svg { display: block; }
            </style>
            <svg width="950" height="611" viewBox="961 112 950 611">
                <defs>
                    <linearGradient id="trap" x1="0" x2="0" y1="0" y2="1"><stop offset="0" stop-color="#b7babc"/><stop offset="1" stop-color="#b3b6b8"/></linearGradient>
                    <linearGradient id="blk" x1="0" x2="1">
                        <stop offset="0" stop-color="#a3a3a3"/><stop offset=".09" stop-color="#bcbcbc"/><stop offset=".14" stop-color="#aaa"/><stop offset=".17" stop-color="#b5b5b5"/><stop offset=".83" stop-color="#b5b5b5"/><stop offset=".9" stop-color="#b0b0b0"/><stop offset=".96" stop-color="#a4a4a4"/><stop offset="1" stop-color="#a8a8a8"/>
                    </linearGradient>
                    <linearGradient id="mid" x1="0" x2="1"><stop offset="0" stop-color="#b0b0b0"/><stop offset=".13" stop-color="#bbb"/><stop offset=".15" stop-color="#b4b4b4"/><stop offset=".9" stop-color="#b4b4b4"/><stop offset="1" stop-color="#a4a4a4"/></linearGradient>
                </defs>
                ${v}
            </svg>`;
    }
}
customElements.define('geom-view', GeomView);

class GraphicsPanel extends HTMLElement {
    connectedCallback() {
        this.attachShadow({ mode: 'open' });
        this.shadowRoot.innerHTML = `
            <style>
                :host { display: block; width: 952px; }
                com-panel { display: block; height: 689px; --title-x: 9px; --ctl-x: 1px; }
                tool-bar { margin: -5px 0 0 2px; height: 45px; align-content: flex-start; width: 945px; }
            </style>
            <com-panel heading="图形">
                <tool-bar spec="zin zout zbox zsel zext s14 axes t21 xy yz xz rcw rccw cam3 s15 *sfull c1 c2 c3 c4 c5 s17 sa sb sc sd s16 hide *win win2 win3 undo s16 *persp *ortho box s14 noscene palette t16 s19 camera br print"></tool-bar>
                <geom-view></geom-view>
            </com-panel>`;
    }
}
customElements.define('graphics-panel', GraphicsPanel);

class MessagesPanel extends HTMLElement {
    connectedCallback() {
        this.attachShadow({ mode: 'open' });
        this.shadowRoot.innerHTML = `
            <style>
                :host { display: block; width: 952px; height: 128px; box-sizing: border-box; background: #fafcff; border: 1px solid #d3d8de; border-bottom: 0; overflow: hidden; position: relative; font-size: 13px; }
                .tabs { display: flex; gap: 8px; height: 25px; margin-top: 5px; padding-left: 4px; border-bottom: 1px solid #d3d8de; align-items: flex-end; }
                .tab { box-sizing: border-box; height: 25px; padding: 0 4px; line-height: 24px; background: #eee; display: flex; gap: 8px; align-items: center; }
                .tab.on { height: 26px; margin-bottom: -1px; background: #fafcff; color: #3a6ba5; border: 1px solid #d3d8de; border-bottom: 0; }
                .x { color: #c4c8cc; font-size: 12px; }
                .bar { height: 30px; display: flex; align-items: center; padding-left: 8px; }
                .log { box-sizing: border-box; margin-left: 4px; width: 942px; height: 80px; padding: 0 3px; background: #fff; border: 1px solid #d3d8de; font-size: 12.500px; line-height: 17px; white-space: nowrap; }
                .ctl { position: absolute; right: 1px; top: 14px; display: flex; gap: 8px; align-items: center; --tri: #cfd4da; }
                .pin { width: 4px; height: 9px; background: #cfd4da; margin-right: 4px; }
            </style>
            <div class="tabs">
                <div class="tab on">消息<span class="x">✕</span></div>
                <div class="tab">进度</div>
                <div class="tab">日志</div>
                <div class="tab">表格<span class="x">✕</span></div>
            </div>
            <div class="ctl"><com-tri></com-tri><span class="pin"></span></div>
            <div class="bar"><com-icon name="broom"></com-icon></div>
            <div class="log">
                <div>COMSOL Multiphysics 5.4.0.225</div>
                <div>[2020-10-14 下午8:12] 打开的文件：E:\\研一\\model\\20.偏振转换Metasurface\\创建三维对象.mph</div>
                <div>[2020-10-14 下午8:15] 保存的文件：E:\\研一\\model\\20.偏振转换Metasurface\\创建三维对象.mph</div>
                <div>[2020-10-14 下午8:23] 几何错误（arr1）：必须提供输入对象。</div>
            </div>`;
    }
}
customElements.define('messages-panel', MessagesPanel);

// 桌面上盖着的网速小球, 滚动条和缩略图
class NetWidget extends HTMLElement {
    connectedCallback() {
        this.attachShadow({ mode: 'open' });
        this.shadowRoot.innerHTML = `
            <style>
                :host { position: absolute; left: 0; top: 0; width: 0; height: 0; font-family: Roboto, sans-serif; }
                .ball { position: absolute; left: 1779px; top: 747px; z-index: 2; width: 60px; height: 60px; }
                .pill { position: absolute; left: 1825px; top: 756px; width: 73px; height: 42px; border-radius: 21px; background: #30333d; color: #fff; }
                .r { position: absolute; height: 21px; line-height: 21px; display: flex; align-items: center; font-size: 12px; font-weight: 500; }
                .r svg { margin-right: 9px; }
                .r small { font-weight: 400; font-size: 9.500px; color: #9a9da5; margin-left: 1px; }
                .scroll { position: absolute; left: 1906px; top: 93px; box-sizing: border-box; width: 8px; height: 51px; border: 2px solid #888; border-radius: 4px; background: #fff; }
                .scroll i { position: absolute; left: 1px; bottom: 0; width: 2px; height: 26px; background: #f07a28; }
                .thumb { position: absolute; left: 1885px; top: 118px; }
            </style>
            <div class="scroll"><i></i></div>
            <svg class="thumb" width="20" height="18"><path d="M1 1l18 0 0 15-15 2z" fill="#eef0f2"/><rect x="5" y="2" width="13" height="10" rx="2" fill="#1b4f9c"/><path d="M9 11l8-8v8z" fill="#f2c51e"/></svg>
            <div class="pill">
                <div class="r" style="top:0;left:15px"><svg width="8" height="9"><path d="M4 0l4 5H5v4H3V5H0z" fill="#35a9f0"/></svg>0.9<small>K/s</small></div>
                <div class="r" style="top:21px;left:15px"><svg width="8" height="9"><path d="M4 9l4-5H5V0H3v4H0z" fill="#2dbb3d"/></svg>0.3<small>K/s</small></div>
            </div>
            <svg class="ball" viewBox="0 0 60 60">
                <defs>
                    <linearGradient id="rim" x1="0" x2="0" y1="0" y2="1"><stop offset="0" stop-color="#38d6c8"/><stop offset=".55" stop-color="#7fdc8e"/><stop offset="1" stop-color="#f0e04a"/></linearGradient>
                    <linearGradient id="bg" x1="0" x2="0" y1="0" y2="1"><stop offset="0" stop-color="#555a66"/><stop offset="1" stop-color="#3f434e"/></linearGradient>
                </defs>
                <circle cx="28" cy="30" r="29.500" fill="url(#bg)"/>
                <path d="M30 5.100A25 25 0 1 1 19 53.500" fill="none" stroke="url(#rim)" stroke-width="1.500"/>
                <text x="13" y="38" font-size="25" font-weight="300" fill="#fff">57</text>
                <text x="40" y="38" font-size="10" fill="#fff">%</text>
            </svg>`;
    }
}
customElements.define('net-widget', NetWidget);

class BlogMark extends HTMLElement {
    connectedCallback() {
        this.attachShadow({ mode: 'open' });
        this.shadowRoot.innerHTML = `
            <style>
                :host { position: absolute; left: 1662px; top: 827px; font: 16px/22px "Liberation Sans", sans-serif; color: rgba(140, 140, 140, .32); white-space: nowrap; }
            </style>
            <slot></slot>`;
    }
}
customElements.define('blog-mark', BlogMark);
</script>
</body>
</html>
